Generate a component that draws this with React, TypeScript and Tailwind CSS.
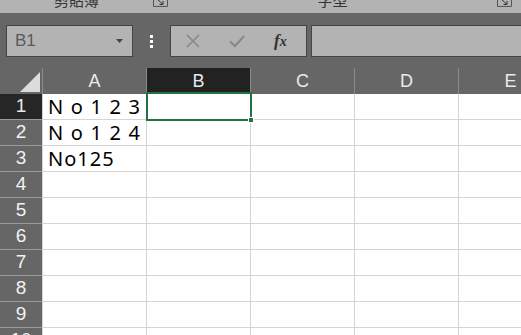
import React from "react"

const COLS = ["A", "B", "C", "D", "E"]
const ROWS = [1, 2, 3, 4, 5, 6, 7, 8, 9, 10]
const DATA: Record<string, string> = { A1: "N o 1 2 3", A2: "N o 1 2 4", A3: "No125" }

function Launcher() {
  return (
    <svg width="15" height="9" viewBox="0 0 15 9" className="block">
      <path d="M0.5 0 V8.5 H14.5 V0" fill="none" stroke="#555" strokeWidth="1" />
      <path d="M4 1 L10 6.5 M10 3 V6.5 H6.5" fill="none" stroke="#333" strokeWidth="1" />
    </svg>
  )
}

export default function App() {
  return (
    <div className="w-[521px] h-[335px] overflow-hidden bg-white font-['Liberation_Sans',Arial,sans-serif]">
      {/* ribbon bottom edge */}
      <div className="h-[13px] bg-[#b3b3b3] flex overflow-hidden relative">
        <div className="w-[153px] flex justify-center">
          <span className="text-[15px] leading-[15px] -mt-[8px] text-[#333] font-['Noto_Sans_CJK_TC',sans-serif]">剪貼簿</span>
        </div>
        <div className="-mt-[2px]"><Launcher /></div>
        <div className="flex-1 flex justify-center">
          <span className="text-[15px] leading-[15px] -mt-[8px] text-[#333] font-['Noto_Sans_CJK_TC',sans-serif]">字型</span>
        </div>
        <div className="-mt-[2px] mr-[9px]"><Launcher /></div>
      </div>

      {/* formula bar */}
      <div className="h-[55px] bg-[#666] pt-[12px] flex items-start">
        <div className="ml-[6px] w-[127px] h-[32px] bg-[#b3b3b3] border border-[#444] flex items-center pl-[8px] pr-[9px]">
          <span className="text-[17px] text-[#5a5a5a] flex-1">B1</span>
          <svg width="7" height="4" viewBox="0 0 7 4"><path d="M0 0 H7 L3.5 4 Z" fill="#444" /></svg>
        </div>
        <div className="w-[37px] h-[32px] flex flex-col items-center justify-center gap-[2px]">
          <span className="w-[3px] h-[3px] bg-white" />
          <span className="w-[3px] h-[3px] bg-white" />
          <span className="w-[3px] h-[3px] bg-white" />
        </div>
        <div className="w-[137px] h-[32px] bg-[#b3b3b3] border border-[#444] flex items-center">
          <svg width="14" height="14" viewBox="0 0 14 14" className="ml-[15px]">
            <path d="M1 1 L13 13 M13 1 L1 13" stroke="#888" strokeWidth="1.6" />
          </svg>
          <svg width="16" height="14" viewBox="0 0 16 14" className="ml-[29px]">
            <path d="M1 7.5 L6 12 L15 2" fill="none" stroke="#888" strokeWidth="2" />
          </svg>
          <span className="ml-[29px] text-[17px] italic font-bold text-[#333] font-['Liberation_Serif',serif]">
            f<span className="text-[14px]">x</span>
          </span>
        </div>
        <div className="ml-[4px] flex-1 h-[32px] bg-[#b3b3b3] border border-[#444] border-r-0" />
      </div>

      {/* sheet */}
      <div className="flex h-[26px] bg-[#666]">
        <div className="w-[42px] shrink-0 flex items-end justify-end pr-[2px] pb-[2px]">
          <svg width="20" height="20" viewBox="0 0 20 20"><path d="M20 0 V20 H0 Z" fill="#dcdcdc" /></svg>
        </div>
        {COLS.map((c) => (
          <div
            key={c}
            className={`w-[104px] shrink-0 border-l border-[#8a8a8a] flex items-center justify-center text-[18px] ${
              c === "B" ? "bg-[#222] text-[#e8e8e8]" : "text-[#eaeaea]"
            }`}
          >
            {c}
          </div>
        ))}
      </div>

      {ROWS.map((r) => (
        <div key={r} className="flex h-[26px]">
          <div
            className={`w-[42px] shrink-0 border-b border-[#9a9a9a] flex items-center justify-center text-[19px] ${
              r === 1 ? "bg-[#262626] text-[#e8e8e8]" : "bg-[#666] text-[#f2f2f2]"
            }`}
          >
            {r}
          </div>
          {COLS.map((c) => (
            <div key={c} className="w-[104px] shrink-0 border-l border-b border-[#d4d4d4] relative flex items-center">
              {DATA[c + r] && (
                <span
                  className={`pl-[5px] text-[20px] text-black whitespace-pre font-['Noto_Sans',sans-serif] ${
                    r === 3 ? "tracking-[1px]" : "tracking-[1.2px]"
                  }`}
                >
                  {DATA[c + r]}
                </span>
              )}
              {c === "B" && r === 1 && (
                <div className="absolute z-10 -left-px -top-[2px] w-[106px] h-[29px] border-2 border-[#217346]">
                  <div className="absolute -right-[4px] -bottom-[4px] w-[6px] h-[6px] bg-[#217346] border border-white" />
                </div>
              )}
            </div>
          ))}
        </div>
      ))}
    </div>
  )
}
